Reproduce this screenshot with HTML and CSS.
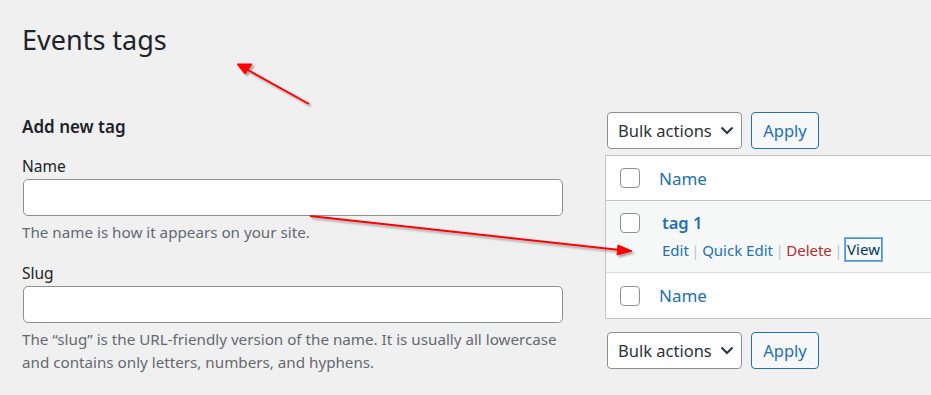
FILE: index.html
```html
<!DOCTYPE html>
<html lang="en">
<head>
<meta charset="utf-8">
<title>Events tags</title>
<link rel="stylesheet" href="styles.css">
</head>
<body>
<div class="wrap">
  <h1 class="page-title">Events tags</h1>
  <div class="columns">
    <div class="col-left">
      <h2 class="form-title">Add new tag</h2>
      <div class="field">
        <label class="field-label">Name</label>
        <input class="text-input" type="text">
        <p class="help">The name is how it appears on your site.</p>
      </div>
      <div class="field">
        <label class="field-label">Slug</label>
        <input class="text-input" type="text">
        <p class="help">The “slug” is the URL-friendly version of the name. It is usually all lowercase and contains only letters, numbers, and hyphens.</p>
      </div>
    </div>
    <div class="col-right">
      <div class="tablenav">
        <div class="select">Bulk actions<svg class="chev" width="14" height="9" viewBox="0 0 14 9"><path d="M1.5 1.5 L7 7 L12.5 1.5" fill="none" stroke="#2c3338" stroke-width="2"/></svg></div>
        <div class="btn">Apply</div>
      </div>
      <div class="table">
        <div class="row head">
          <span class="cb"></span>
          <span class="col-name">Name</span>
        </div>
        <div class="row item">
          <span class="cb"></span>
          <div class="cell">
            <span class="tag-name">tag 1</span>
            <div class="actions">
              <span class="act">Edit</span><span class="sep">|</span><span class="act">Quick Edit</span><span class="sep">|</span><span class="act del">Delete</span><span class="sep">|</span><span class="act focus">View</span>
            </div>
          </div>
        </div>
        <div class="row foot">
          <span class="cb"></span>
          <span class="col-name">Name</span>
        </div>
      </div>
      <div class="tablenav bottom">
        <div class="select">Bulk actions<svg class="chev" width="14" height="9" viewBox="0 0 14 9"><path d="M1.5 1.5 L7 7 L12.5 1.5" fill="none" stroke="#2c3338" stroke-width="2"/></svg></div>
        <div class="btn">Apply</div>
      </div>
    </div>
  </div>
</div>
<svg class="annot" width="931" height="395" viewBox="0 0 931 395">
  <defs>
    <filter id="sh" x="-10%" y="-10%" width="130%" height="130%">
      <feDropShadow dx="2" dy="2" stdDeviation="1.2" flood-color="#000" flood-opacity="0.35"/>
    </filter>
  </defs>
  <g filter="url(#sh)" fill="#ff0000" stroke="#ff0000">
    <line x1="309" y1="104" x2="246" y2="69" stroke-width="2"/>
    <polygon points="237,64 252,64 245,74" stroke-width="1"/>
    <line x1="310" y1="216" x2="620" y2="250" stroke-width="2"/>
    <polygon points="632,251 618,245 617,255" stroke-width="1"/>
  </g>
</svg>
</body>
</html>
```

FILE: styles.css
```css
* { box-sizing: border-box; }
html, body { margin: 0; padding: 0; }
body {
  background: #f0f0f1;
  color: #1d2327;
  font-family: "Noto Sans", "Open Sans", sans-serif;
  font-size: 15.5px;
  width: 931px;
  height: 395px;
  overflow: hidden;
  position: relative;
}
.wrap { padding: 22px 0 0 22px; }
.page-title {
  margin: 0;
  font-size: 27px;
  font-weight: 400;
  line-height: 36px;
  color: #1d2327;
}
.columns { display: flex; gap: 43px; margin-top: 10px; }
.col-left { width: 540px; flex: none; padding-top: 47px; }
.form-title {
  margin: 0 0 16px;
  font-size: 17px;
  font-weight: 600;
  line-height: 24px;
}
.field { margin-bottom: 18px; }
.field-label { display: block; line-height: 22px; margin-bottom: 2px; font-size: 15.5px; }
.text-input {
  display: block;
  width: 540px;
  height: 37px;
  margin: 0 0 0 1px;
  border: 1px solid #8c8f94;
  border-radius: 5px;
  background: #fff;
}
.help {
  margin: 5px 0 0;
  width: 552px;
  color: #646970;
  line-height: 23px;
  font-size: 15.2px;
}
.col-right { flex: 1; padding-top: 44px; }
.tablenav { display: flex; gap: 9px; margin-left: 2px; }
.tablenav.bottom { margin-top: 13px; }
.select {
  width: 135px;
  height: 37px;
  border: 1px solid #8c8f94;
  border-radius: 4px;
  background: #fff;
  color: #2c3338;
  display: flex;
  align-items: center;
  padding-left: 10px;
  font-size: 16.5px;
  gap: 8px;
}
.btn {
  width: 68px;
  height: 37px;
  border: 1px solid #2271b1;
  border-radius: 4px;
  background: #f6f7f7;
  color: #2271b1;
  display: flex;
  align-items: center;
  justify-content: center;
  font-size: 16.5px;
}
.table {
  margin-top: 6px;
  border: 1px solid #c3c4c7;
  border-right: none;
  background: #fff;
}
.row { display: flex; align-items: flex-start; padding-left: 14px; }
.row.head { height: 45px; align-items: center; border-bottom: 1px solid #c3c4c7; }
.row.item { height: 72px; background: #f6f7f7; border-bottom: 1px solid #dcdcde; padding-top: 12px; }
.row.foot { height: 45px; align-items: center; }
.cb {
  width: 20px;
  height: 20px;
  flex: none;
  border: 1px solid #8c8f94;
  border-radius: 4px;
  background: #fff;
}
.col-name { margin-left: 19px; color: #2271b1; font-size: 17px; }
.cell { margin-left: 22px; }
.tag-name { display: block; color: #2271b1; font-weight: 600; font-size: 16.5px; line-height: 22px; margin-top: -1px; }
.actions { margin-top: 5px; font-size: 15px; line-height: 22px; display: flex; }
.act { color: #2271b1; }
.act.del { color: #b32d2e; }
.act.focus { color: #043959; border: 1px solid #4f94d4; box-shadow: 0 0 0 1px #72aee6; padding: 0 1px; line-height: 20px; margin-top: -1px; }
.sep { color: #c3c4c7; margin: 0 2.5px; }
.annot { position: absolute; left: 0; top: 0; pointer-events: none; }
```
